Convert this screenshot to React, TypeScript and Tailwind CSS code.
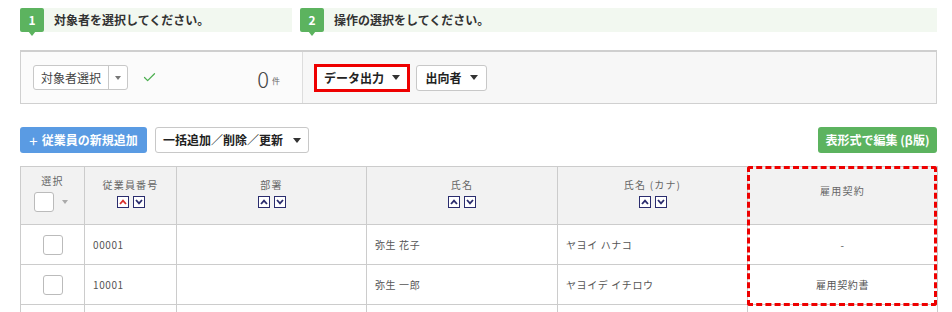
import { Check } from "lucide-react";

const font = { fontFamily: '"Noto Sans CJK JP", "Noto Sans", sans-serif' };

function Caret({ color = "#333" }: { color?: string }) {
  return (
    <svg width="8" height="5" viewBox="0 0 8 5" className="shrink-0">
      <path d="M0 0 L8 0 L4 5 Z" fill={color} />
    </svg>
  );
}

function SortBtn({ dir, active }: { dir: "up" | "down"; active?: boolean }) {
  const c = active ? "#d9302c" : "#2b2d6e";
  return (
    <span className="inline-flex w-[12px] h-[12px] items-center justify-center border border-[#2b2d6e] bg-white">
      <svg width="8" height="6" viewBox="0 0 8 6">
        {dir === "up" ? (
          <path d="M1 5 L4 1.6 L7 5" fill="none" stroke={c} strokeWidth="1.8" />
        ) : (
          <path d="M1 1 L4 4.4 L7 1" fill="none" stroke={c} strokeWidth="1.8" />
        )}
      </svg>
    </span>
  );
}

function Sorts({ active }: { active?: boolean }) {
  return (
    <div className="flex gap-[4px] justify-center mt-[4px]">
      <SortBtn dir="up" active={active} />
      <SortBtn dir="down" />
    </div>
  );
}

function Step({ n, text, className }: { n: string; text: string; className: string }) {
  return (
    <div className={`flex h-[24px] ${className}`}>
      <div className="relative w-[24px] h-[24px] bg-[#5cb35f] rounded-[2px] text-white text-[12px] font-bold flex items-center justify-center">
        {n}
        <span className="absolute left-[8px] top-[23px] w-0 h-0 border-l-[4px] border-r-[4px] border-t-[5px] border-l-transparent border-r-transparent border-t-[#5cb35f]" />
      </div>
      <div className="flex-1 bg-[#f2f8f0] flex items-center pl-[10px] text-[12px] font-bold text-[#333]">{text}</div>
    </div>
  );
}

function Checkbox() {
  return <span className="inline-block w-[20px] h-[20px] border border-[#bbb] rounded-[3px] bg-white" />;
}

const rows = [
  { no: "00001", name: "弥生 花子", kana: "ヤヨイ ハナコ", c: "-" },
  { no: "10001", name: "弥生 一郎", kana: "ヤヨイデ イチロウ", c: "雇用契約書" },
];

export default function App() {
  return (
    <div className="w-[952px] h-[312px] overflow-hidden bg-white pl-[20px] pr-[15px] pt-[8px] text-[#333]" style={font}>
      <div className="flex gap-[8px]">
        <Step n="1" text="対象者を選択してください。" className="w-[272px]" />
        <Step n="2" text="操作の選択をしてください。" className="flex-1" />
      </div>

      <div className="mt-[18px] h-[54px] flex border border-[#d0d0d0] border-t-2 border-t-[#cfcfcf]">
        <div className="w-[282px] bg-[#fbfbfb] border-r border-[#ddd] flex items-center pl-[12px] pr-[22px]">
          <div className="flex h-[25px] border border-[#c8c8c8] rounded-[3px] bg-white">
            <span className="w-[75px] flex items-center justify-center text-[12px] text-[#444] border-r border-[#c8c8c8]">対象者選択</span>
            <span className="w-[18px] flex items-center justify-center">
              <svg width="6" height="4" viewBox="0 0 6 4"><path d="M0 0 L6 0 L3 4 Z" fill="#777" /></svg>
            </span>
          </div>
          <Check size={15} strokeWidth={2} color="#4caf50" className="ml-[14px]" />
          <span className="ml-auto text-[22px] leading-none font-light text-[#444]">0</span>
          <span className="ml-[3px] mt-[6px] text-[8px] text-[#666]">件</span>
        </div>
        <div className="flex-1 bg-[#f7f7f7] flex items-center pl-[11px] gap-[6px]">
          <button className="h-[28px] w-[96px] border-[3px] border-[#e00] bg-white flex items-center justify-center gap-[8px] text-[12px] font-bold text-[#222]">
            データ出力 <Caret />
          </button>
          <button className="h-[26px] w-[71px] border border-[#c8c8c8] rounded-[3px] bg-white flex items-center justify-center gap-[8px] text-[12px] font-bold text-[#222]">
            出向者 <Caret />
          </button>
        </div>
      </div>

      <div className="mt-[23px] flex items-center">
        <button className="h-[26px] w-[127px] rounded-[3px] bg-[#5a9be3] text-white text-[12px] font-bold flex items-center justify-center gap-[4px]">
          <span className="text-[15px] font-normal leading-none">+</span> 従業員の新規追加
        </button>
        <button className="ml-[8px] h-[26px] w-[154px] rounded-[3px] border border-[#c8c8c8] bg-white text-[12px] font-bold text-[#222] flex items-center justify-center gap-[10px]">
          一括追加／削除／更新 <Caret />
        </button>
        <button className="ml-auto h-[26px] w-[119px] rounded-[3px] bg-[#5cb35f] text-white text-[12px] font-bold flex items-center justify-center">
          表形式で編集 (β版)
        </button>
      </div>

      <div className="relative mt-[13px]">
        <table className="w-[917px] border-collapse table-fixed text-[10px] text-[#555] tracking-[0.6px]">
          <colgroup>
            <col className="w-[64px]" />
            <col className="w-[92px]" />
            <col className="w-[190px]" />
            <col className="w-[191px]" />
            <col className="w-[190px]" />
            <col className="w-[190px]" />
          </colgroup>
          <thead>
            <tr className="h-[58px] bg-[#f2f2f2] text-[#666] tracking-[1.2px]">
              <th className="border border-[#ccc] font-normal align-top pt-[6px]">
                <div>選択</div>
                <div className="flex items-center justify-center gap-[8px] mt-[4px] pr-[4px]">
                  <Checkbox />
                  <svg width="6" height="4" viewBox="0 0 6 4"><path d="M0 0 L6 0 L3 4 Z" fill="#aaa" /></svg>
                </div>
              </th>
              <th className="border border-[#ccc] font-normal align-top pt-[10px]">
                <div>従業員番号</div>
                <Sorts active />
              </th>
              <th className="border border-[#ccc] font-normal align-top pt-[10px]">
                <div>部署</div>
                <Sorts />
              </th>
              <th className="border border-[#ccc] font-normal align-top pt-[10px]">
                <div>氏名</div>
                <Sorts />
              </th>
              <th className="border border-[#ccc] font-normal align-top pt-[10px]">
                <div>氏名 (カナ)</div>
                <Sorts />
              </th>
              <th className="border border-[#ccc] font-normal align-middle pb-[10px]">雇用契約</th>
            </tr>
          </thead>
          <tbody>
            {rows.map((r) => (
              <tr key={r.no} className="h-[40px]">
                <td className="border border-[#ccc] text-center">
                  <div className="flex justify-center"><Checkbox /></div>
                </td>
                <td className="border border-[#ccc] pl-[8px]">{r.no}</td>
                <td className="border border-[#ccc]"></td>
                <td className="border border-[#ccc] pl-[8px]">{r.name}</td>
                <td className="border border-[#ccc] pl-[8px]">{r.kana}</td>
                <td className="border border-[#ccc] text-center">{r.c}</td>
              </tr>
            ))}
            <tr className="h-[40px]">
              <td className="border border-[#ccc]"></td>
              <td className="border border-[#ccc]"></td>
              <td className="border border-[#ccc]"></td>
              <td className="border border-[#ccc]"></td>
              <td className="border border-[#ccc]"></td>
              <td className="border border-[#ccc]"></td>
            </tr>
          </tbody>
        </table>
        <div className="absolute left-[727px] top-0 w-[190px] h-[140px] border-[3px] border-dashed border-[#e00] rounded-[3px] pointer-events-none" />
      </div>
    </div>
  );
}
